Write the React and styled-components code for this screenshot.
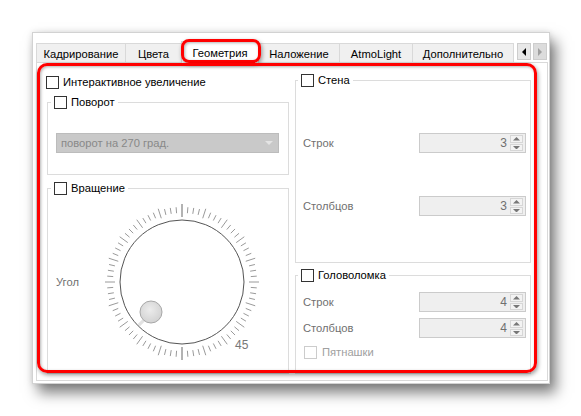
import React from 'react';
import styled, { createGlobalStyle } from 'styled-components';

const GlobalStyle = createGlobalStyle`
  html, body { margin: 0; padding: 0; background: #fff; }
  body {
    font-family: "Liberation Sans", Arial, sans-serif;
    font-size: 11.2px;
    color: #000;
  }
`;

const Page = styled.div`
  width: 581px;
  height: 416px;
  padding: 32px 0 0 32px;
  box-sizing: border-box;
  overflow: hidden;
`;

const Window = styled.div`
  position: relative;
  width: 518px;
  height: 352px;
  box-sizing: border-box;
  background: #fff;
  border: 1px solid #d2d2d2;
  box-shadow: 6px 9px 13px rgba(0, 0, 0, 0.5), 0 0 6px rgba(0, 0, 0, 0.12);
  padding: 8px 1px 2px 3px;
  display: flex;
  flex-direction: column;
`;

const TabBar = styled.div`
  display: flex;
  align-items: flex-end;
  height: 21px;
`;

const Tab = styled.div`
  position: relative;
  z-index: ${p => (p.$active ? 1 : 0)};
  box-sizing: border-box;
  width: ${p => p.$w}px;
  height: ${p => (p.$active ? 22 : 19)}px;
  margin-right: -1px;
  margin-bottom: ${p => (p.$active ? -1 : 0)}px;
  border: 1px solid #d9d9d9;
  border-bottom: none;
  background: ${p => (p.$active ? '#fff' : '#f0f0f0')};
  display: flex;
  align-items: center;
  justify-content: center;
  padding-top: ${p => (p.$active ? 0 : 1)}px;
  white-space: nowrap;
`;

const Arrows = styled.div`
  display: flex;
  gap: 2px;
  margin-left: 4px;
  align-self: flex-start;
  margin-top: 2px;
`;

const ArrowBtn = styled.div`
  box-sizing: border-box;
  width: 14px;
  height: 17px;
  border: 1px solid #cdcdcd;
  background: ${p => (p.$dim ? '#dcdcdc' : '#e8e8e8')};
  display: flex;
  align-items: center;
  justify-content: center;
`;

const Pane = styled.div`
  box-sizing: border-box;
  height: 319px;
  border: 1px solid #d9d9d9;
  background: #fff;
  padding: 10px 15px 6px 10px;
  display: grid;
  grid-template-columns: 242px 236px;
  column-gap: 6px;
`;

const Column = styled.div`
  display: flex;
  flex-direction: column;
  min-height: 0;
`;

const CheckRow = styled.div`
  display: flex;
  align-items: center;
  gap: ${p => p.$gap || 4}px;
  height: 14px;
  margin-top: ${p => p.$mt || 0}px;
  margin-left: ${p => p.$ml || 0}px;
  color: ${p => (p.$disabled ? '#a0a0a0' : '#000')};
  white-space: nowrap;
`;

const Box = styled.span`
  box-sizing: border-box;
  width: 13px;
  height: 13px;
  border: 1px solid ${p => (p.$disabled ? '#cccccc' : '#333')};
  background: #fff;
  flex: none;
`;

const Group = styled.div`
  box-sizing: border-box;
  border: 1px solid #dcdcdc;
  margin-top: ${p => p.$mt}px;
  padding: 0 ${p => p.$pr || 9}px ${p => p.$pb || 0}px ${p => p.$pl || 8}px;
  display: flex;
  flex-direction: column;
  flex: ${p => (p.$grow ? 1 : 'none')};
  height: ${p => (p.$h ? `${p.$h}px` : 'auto')};
`;

const Legend = styled.div`
  display: flex;
  align-items: center;
  gap: 4px;
  width: fit-content;
  height: 14px;
  margin: -8px 0 0 -5px;
  padding: 0 3px;
  background: #fff;
  white-space: nowrap;
`;

const Combo = styled.div`
  box-sizing: border-box;
  margin-top: 24px;
  height: 20px;
  border: 1px solid #bcbcbc;
  background: #c9c9c9;
  color: #888;
  display: flex;
  align-items: center;
  justify-content: space-between;
  padding: 0 5px 0 4px;
`;

const DialRow = styled.div`
  display: flex;
  align-items: center;
  margin-top: 7px;
`;

const Label = styled.span`
  color: #707070;
  width: ${p => (p.$w ? `${p.$w}px` : 'auto')};
  flex: none;
`;

const FieldRow = styled.div`
  display: flex;
  align-items: center;
  justify-content: space-between;
  height: 20px;
  margin-top: ${p => p.$mt}px;
`;

const Spin = styled.div`
  box-sizing: border-box;
  width: 107px;
  height: 20px;
  border: 1px solid #cbcbcb;
  background: #efefef;
  display: flex;
  align-items: stretch;
  padding: 1px;
`;

const SpinValue = styled.span`
  flex: 1;
  text-align: right;
  padding-right: 3px;
  color: #707070;
  line-height: 16px;
  font-size: 12px;
`;

const SpinButtons = styled.div`
  width: 13px;
  display: flex;
  flex-direction: column;
  gap: 1px;
  margin-right: 1px;
`;

const SpinButton = styled.div`
  flex: 1;
  box-sizing: border-box;
  border: 1px solid #d6d6d6;
  background: #f3f3f3;
  display: flex;
  align-items: center;
  justify-content: center;
`;

const Highlight = styled.div`
  position: absolute;
  left: ${p => p.$x}px;
  top: ${p => p.$y}px;
  width: ${p => p.$w}px;
  height: ${p => p.$h}px;
  box-sizing: border-box;
  border: 3.5px solid #f00;
  border-radius: ${p => p.$r}px;
  box-shadow: 1px 2px 4px rgba(0, 0, 0, 0.4), inset 1px 1px 3px rgba(0, 0, 0, 0.3);
  pointer-events: none;
  z-index: 5;
`;

const Tri = ({ dir, color, size = 4 }) => {
  const s = size;
  const pts = {
    left: `${s},0 ${s},${2 * s} 0,${s}`,
    right: `0,0 0,${2 * s} ${s},${s}`,
    up: `0,${s} ${2 * s},${s} ${s},0`,
    down: `0,0 ${2 * s},0 ${s},${s}`,
  }[dir];
  const w = dir === 'left' || dir === 'right' ? s : 2 * s;
  const h = dir === 'left' || dir === 'right' ? 2 * s : s;
  return (
    <svg width={w} height={h} viewBox={`0 0 ${w} ${h}`}>
      <polygon points={pts} fill={color} />
    </svg>
  );
};

const SpinBox = ({ value }) => (
  <Spin>
    <SpinValue>{value}</SpinValue>
    <SpinButtons>
      <SpinButton><Tri dir="up" color="#777" size={3.5} /></SpinButton>
      <SpinButton><Tri dir="down" color="#777" size={3.5} /></SpinButton>
    </SpinButtons>
  </Spin>
);

const Dial = () => {
  const cx = 80;
  const cy = 80;
  const ticks = Array.from({ length: 80 }, (_, i) => {
    const a = (i * 4.5 * Math.PI) / 180;
    const major = i % 40 === 0;
    const mid = i % 4 === 0;
    const r1 = major ? 65 : mid ? 67 : 69;
    const r2 = major ? 78 : mid ? 77 : 75;
    return (
      <line
        key={i}
        x1={cx + r1 * Math.sin(a)}
        y1={cy - r1 * Math.cos(a)}
        x2={cx + r2 * Math.sin(a)}
        y2={cy - r2 * Math.cos(a)}
        stroke={major ? '#666' : '#9a9a9a'}
        strokeWidth="1"
      />
    );
  });
  const k = Math.SQRT1_2;
  return (
    <svg width="160" height="160" viewBox="0 0 160 160">
      <defs>
        <radialGradient id="knob" cx="0.45" cy="0.4" r="0.6">
          <stop offset="0" stopColor="#ececec" />
          <stop offset="1" stopColor="#d2d2d2" />
        </radialGradient>
      </defs>
      {ticks}
      <circle cx={cx} cy={cy} r="62" fill="#fff" stroke="#555" strokeWidth="1" />
      <line
        x1={cx - 44 * k}
        y1={cy + 44 * k}
        x2={cx - 61 * k}
        y2={cy + 61 * k}
        stroke="#e2e2e2"
        strokeWidth="3"
      />
      <circle cx="49" cy="110" r="11" fill="url(#knob)" stroke="#a8a8a8" strokeWidth="1" />
      <text x="133" y="147" fontSize="12" fill="#777" fontFamily="Liberation Sans, Arial, sans-serif">
        45
      </text>
    </svg>
  );
};

const tabs = [
  { t: 'Кадрирование', w: 90 },
  { t: 'Цвета', w: 57 },
  { t: 'Геометрия', w: 78, active: true },
  { t: 'Наложение', w: 82 },
  { t: 'AtmoLight', w: 74 },
  { t: 'Дополнительно', w: 102 },
];

const App = () => (
  <Page>
    <GlobalStyle />
    <Window>
      <TabBar>
        {tabs.map(tab => (
          <Tab key={tab.t} $w={tab.w} $active={tab.active}>{tab.t}</Tab>
        ))}
        <Arrows>
          <ArrowBtn><Tri dir="left" color="#000" size={4} /></ArrowBtn>
          <ArrowBtn $dim><Tri dir="right" color="#a0a0a0" size={4} /></ArrowBtn>
        </Arrows>
      </TabBar>
      <Pane>
        <Column>
          <CheckRow $mt={2} $ml={-1}>
            <Box />
            <span>Интерактивное увеличение</span>
          </CheckRow>
          <Group $mt={13} $pb={21}>
            <Legend><Box /><span>Поворот</span></Legend>
            <Combo>
              <span>поворот на 270 град.</span>
              <Tri dir="down" color="#e4e4e4" size={4} />
            </Combo>
          </Group>
          <Group $mt={13} $grow>
            <Legend><Box /><span>Вращение</span></Legend>
            <DialRow>
              <Label $w={46}>Угол</Label>
              <Dial />
            </DialRow>
          </Group>
        </Column>
        <Column>
          <Group $mt={7} $pl={7} $pr={4} $h={183}>
            <Legend><Box /><span>Стена</span></Legend>
            <FieldRow $mt={46}>
              <Label>Строк</Label>
              <SpinBox value="3" />
            </FieldRow>
            <FieldRow $mt={43}>
              <Label>Столбцов</Label>
              <SpinBox value="3" />
            </FieldRow>
          </Group>
          <Group $mt={12} $pl={7} $pr={4} $grow>
            <Legend><Box /><span>Головоломка</span></Legend>
            <FieldRow $mt={10}>
              <Label>Строк</Label>
              <SpinBox value="4" />
            </FieldRow>
            <FieldRow $mt={6}>
              <Label>Столбцов</Label>
              <SpinBox value="4" />
            </FieldRow>
            <CheckRow $mt={7} $ml={1} $gap={5} $disabled>
              <Box $disabled />
              <span>Пятнашки</span>
            </CheckRow>
          </Group>
        </Column>
      </Pane>
      <Highlight $x={148} $y={6} $w={80} $h={24} $r={8} />
      <Highlight $x={4} $y={30} $w={500} $h={310} $r={10} />
    </Window>
  </Page>
);

export default App;
